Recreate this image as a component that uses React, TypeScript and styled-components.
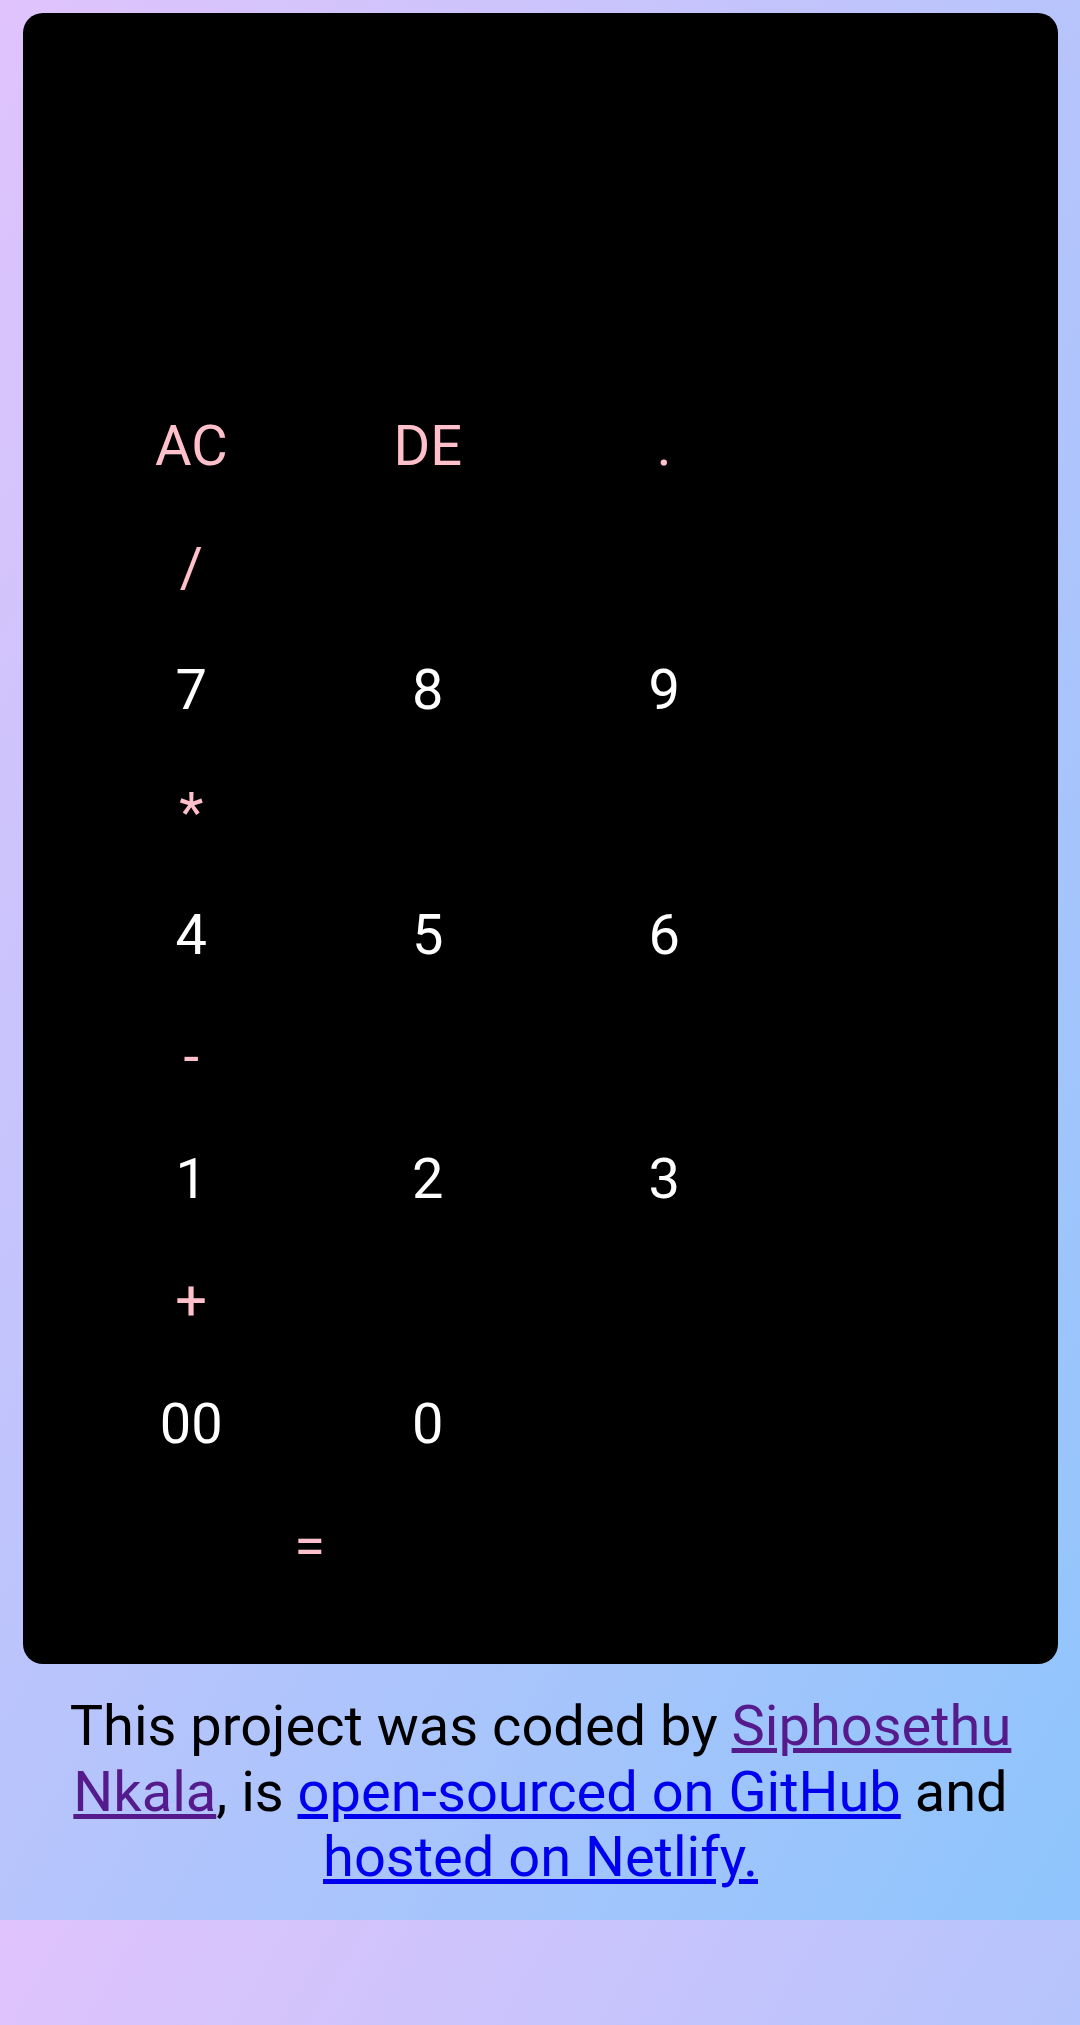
import React from "react";
import styled, { createGlobalStyle } from "styled-components";

const GlobalStyle = createGlobalStyle`
  body {
    margin: 0;
    font-family: Roboto, "Liberation Sans", sans-serif;
    background: linear-gradient(120deg, #e0c3fc 0%, #8ec5fc 100%);
  }
`;

const Page = styled.div`
  padding: 13px 22px 0 23px;
`;

const Card = styled.div`
  background: #000;
  border-radius: 20px;
  padding: 0 50px 57px 50px;
`;

const Display = styled.div`
  height: 372px;
`;

const Row = styled.div`
  display: grid;
  grid-template-columns: repeat(3, 236.5px);
`;

const Key = styled.button<{ $op?: boolean; $span?: number }>`
  background: none;
  border: none;
  padding: 28px 0;
  margin: 0;
  font-family: Roboto, "Liberation Sans", sans-serif;
  font-size: 56px;
  line-height: 66.2px;
  color: ${(p) => (p.$op ? "#ffc0cb" : "#ffffff")};
  grid-column: span ${(p) => p.$span ?? 1};
  text-align: center;
  cursor: pointer;
`;

const Footer = styled.footer`
  padding: 30px 0 29px;
  text-align: center;
  font-size: 56px;
  line-height: 65.6px;
  color: #000;
`;

const Visited = styled.a`
  color: #551a8b;
`;

const Link = styled.a`
  color: #0000ee;
`;

type K = { label: string; op?: boolean; span?: number };

const rows: K[][] = [
  [{ label: "AC", op: true }, { label: "DE", op: true }, { label: ".", op: true }, { label: "/", op: true }],
  [{ label: "7" }, { label: "8" }, { label: "9" }, { label: "*", op: true }],
  [{ label: "4" }, { label: "5" }, { label: "6" }, { label: "-", op: true }],
  [{ label: "1" }, { label: "2" }, { label: "3" }, { label: "+", op: true }],
  [{ label: "00" }, { label: "0" }, { label: "=", op: true, span: 2 }],
];

export default function App() {
  return (
    <>
      <GlobalStyle />
      <Page>
        <Card>
          <Display />
          {rows.map((r, i) => (
            <Row key={i}>
              {r.map((k) => (
                <Key key={k.label} $op={k.op} $span={k.span}>
                  {k.label}
                </Key>
              ))}
            </Row>
          ))}
        </Card>
        <Footer>
          This project was coded by <Visited href="#">Siphosethu Nkala</Visited>, is{" "}
          <Link href="#">open-sourced on GitHub</Link> and{" "}
          <Link href="#">hosted on Netlify.</Link>
        </Footer>
      </Page>
    </>
  );
}
